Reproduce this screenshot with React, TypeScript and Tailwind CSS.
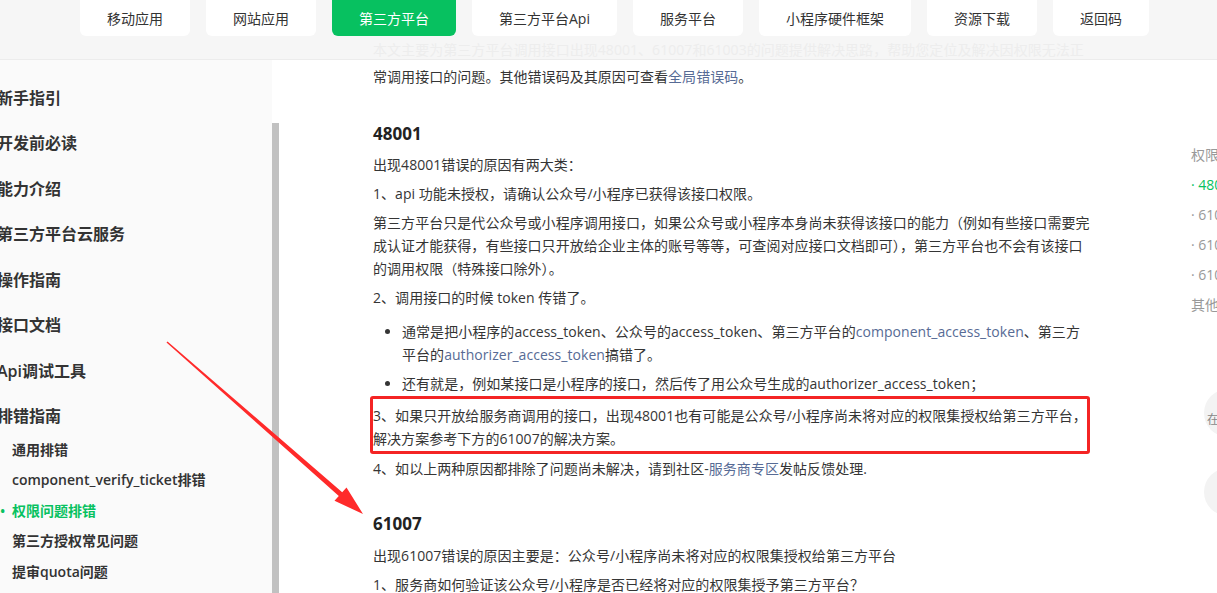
const tabs = ["移动应用", "网站应用", "第三方平台", "第三方平台Api", "服务平台", "小程序硬件框架", "资源下载", "返回码"];

const navItems = ["新手指引", "开发前必读", "能力介绍", "第三方平台云服务", "操作指南", "接口文档", "Api调试工具", "排错指南"];

const subItems = [
  { label: "通用排错" },
  { label: "component_verify_ticket排错" },
  { label: "权限问题排错", active: true },
  { label: "第三方授权常见问题" },
  { label: "提审quota问题" },
];

const toc = [
  { label: "权限问题排错", kind: "title" },
  { label: "· 48001", kind: "active" },
  { label: "· 61007", kind: "item" },
  { label: "· 61003", kind: "item" },
  { label: "· 61004", kind: "item" },
  { label: "其他问题", kind: "title" },
];

function Link({ children }: { children: React.ReactNode }) {
  return <span className="text-[#576b95]">{children}</span>;
}

function Arrow() {
  // hand-drawn red annotation arrow
  return (
    <svg className="pointer-events-none absolute left-0 top-0" width="1217" height="593">
      <polygon
        fill="#ff2a2a"
        points="167.5,341.5 342.2,492.2 346.5,487.5 363,514 334.5,500.8 338.8,496 166.5,342.5"
      />
    </svg>
  );
}

export default function App() {
  return (
    <div
      className="relative h-[593px] w-[1217px] overflow-hidden bg-white text-[#333]"
      style={{ fontFamily: '"Open Sans", "Noto Sans CJK SC", sans-serif' }}
    >
      {/* Top nav */}
      <header className="flex h-[60px] flex-col border-b border-[#ececec] bg-[#f6f6f6]">
        <nav className="flex h-[40px] gap-4 pl-[80px]">
          {tabs.map((t) => (
            <div
              key={t}
              className={
                t === "第三方平台"
                  ? "flex items-center rounded-b-md bg-[#07c160] px-[27px] text-[14px] text-white"
                  : "flex items-center rounded-b-md bg-white px-[27px] text-[14px] text-[#333]"
              }
            >
              {t}
            </div>
          ))}
        </nav>
        <div className="pl-[373px] pt-[5px] text-[14px] leading-[18px] tracking-[0.05px] text-[#ededed] whitespace-nowrap">
          本文主要为第三方平台调用接口出现48001、61007和61003的问题提供解决思路，帮助您定位及解决因权限无法正
        </div>
      </header>

      <div className="flex h-[533px]">
        {/* Sidebar */}
        <aside className="w-[272px] shrink-0 bg-[#fafafa] pt-[15px]">
          <div className="-ml-[3px]">
            {navItems.map((n) => (
              <div key={n} className="flex h-[45.5px] items-center text-[16px] font-semibold text-[#333]">
                {n}
              </div>
            ))}
          </div>
          <div className="-mt-[5px]">
            {subItems.map((s) => (
              <div key={s.label} className="relative flex h-[30.5px] items-center pl-[12px] text-[14px] font-semibold">
                {s.active && <span className="absolute left-[0px] text-[#07c160]">•</span>}
                <span className={s.active ? "text-[#07c160]" : "text-[#333]"}>{s.label}</span>
              </div>
            ))}
          </div>
        </aside>
        <div className="flex w-[7px] shrink-0 flex-col">
          <div className="h-[63px]" />
          <div className="flex-1 bg-[#c1c1c1]" />
        </div>

        {/* Article */}
        <main className="w-[811px] shrink-0 pl-[94px] pt-[5px] text-[14px] leading-[23px] tracking-[0.05px] text-[#353535]">
          <p>
            常调用接口的问题。其他错误码及其原因可查看<Link>全局错误码</Link>。
          </p>

          <h3 className="mt-[34px] mb-[7px] text-[17px] font-bold leading-[24px] tracking-normal text-[#222]">48001</h3>
          <p className="mb-[6px]">出现48001错误的原因有两大类：</p>
          <p className="mb-[6px]">1、api 功能未授权，请确认公众号/小程序已获得该接口权限。</p>
          <p className="mb-[6px] whitespace-nowrap">
            第三方平台只是代公众号或小程序调用接口，如果公众号或小程序本身尚未获得该接口的能力（例如有些接口需要完
            <br />
            成认证才能获得，有些接口只开放给企业主体的账号等等，可查阅对应接口文档即可），第三方平台也不会有该接口
            <br />
            的调用权限（特殊接口除外）。
          </p>
          <p>2、调用接口的时候 token 传错了。</p>
          <ul className="mt-[11px] mb-[1px] list-disc pl-[29px]">
            <li className="mb-[6px] whitespace-nowrap">
              通常是把小程序的access_token、公众号的access_token、第三方平台的<Link>component_access_token</Link>、第三方
              <br />
              平台的<Link>authorizer_access_token</Link>搞错了。
            </li>
            <li>还有就是，例如某接口是小程序的接口，然后传了用公众号生成的authorizer_access_token；</li>
          </ul>
          <div className="-ml-[3px] w-[720px] rounded-[3px] border-[3px] border-[#f42424] pt-[5px] pb-[1px]">
            <p className="whitespace-nowrap">
              3、如果只开放给服务商调用的接口，出现48001也有可能是公众号/小程序尚未将对应的权限集授权给第三方平台，
              <br />
              解决方案参考下方的61007的解决方案。
            </p>
          </div>
          <p className="mt-[3px]">
            4、如以上两种原因都排除了问题尚未解决，请到社区-<Link>服务商专区</Link>发帖反馈处理.
          </p>

          <h3 className="mt-[32px] mb-[8px] text-[17px] font-bold leading-[24px] tracking-normal text-[#222]">61007</h3>
          <p className="mb-[6px]">出现61007错误的原因主要是：公众号/小程序尚未将对应的权限集授权给第三方平台</p>
          <p className="mb-[6px]">1、服务商如何验证该公众号/小程序是否已经将对应的权限集授予第三方平台？</p>
        </main>

        {/* Right TOC */}
        <aside className="min-w-0 flex-1 overflow-hidden pl-[101px] pt-[80px] text-[14px] leading-[30px] whitespace-nowrap">
          {toc.map((t) => (
            <div key={t.label} className={t.kind === "active" ? "text-[#07c160]" : "text-[#999]"}>
              {t.label}
            </div>
          ))}
        </aside>
      </div>

      {/* Floating buttons */}
      <div className="absolute left-[1204px] top-[389px] flex h-[48px] w-[48px] items-end justify-start rounded-full bg-[#f3f3f3] pb-[8px] pl-[3px] text-[12px] text-[#888]">
        在线
      </div>
      <div className="absolute left-[1204px] top-[468px] h-[48px] w-[48px] rounded-full bg-[#f3f3f3]" />

      <Arrow />
    </div>
  );
}
